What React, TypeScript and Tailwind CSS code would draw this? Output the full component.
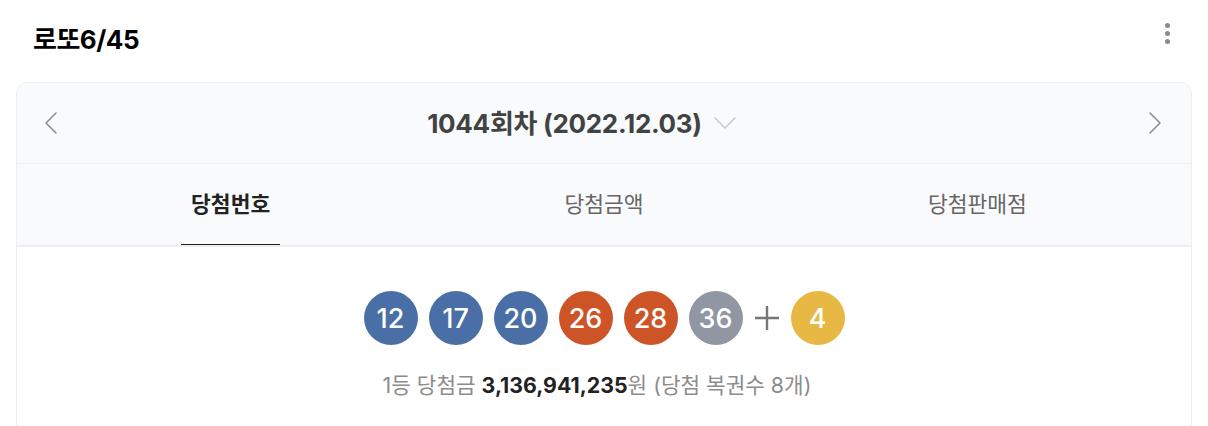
import { ChevronLeft, ChevronRight, ChevronDown } from "lucide-react";

const BALLS = [
  { n: 12, color: "bg-[#4a6fa6]" },
  { n: 17, color: "bg-[#4a6fa6]" },
  { n: 20, color: "bg-[#4a6fa6]" },
  { n: 26, color: "bg-[#cd5427]" },
  { n: 28, color: "bg-[#cd5427]" },
  { n: 36, color: "bg-[#9196a3]" },
];

const TABS = ["당첨번호", "당첨금액", "당첨판매점"];

function Ball({ n, color }: { n: number; color: string }) {
  return (
    <div
      className={`w-[54px] h-[54px] rounded-full ${color} flex items-center justify-center text-white text-[27px] font-medium leading-none`}
    >
      {n}
    </div>
  );
}

export default function App() {
  return (
    <div
      className="w-[1208px] h-[426px] overflow-hidden bg-white"
      style={{ fontFamily: '"Inter", "Noto Sans CJK KR", sans-serif' }}
    >
      {/* title row */}
      <div className="h-[82px] flex items-center justify-between pl-[33px] pr-[38px] pb-[4px]">
        <h1 className="text-[26px] font-bold text-black tracking-[-0.5px]">로또6/45</h1>
        <div className="flex flex-col gap-[3px] mb-[12px]">
          <span className="w-[5px] h-[5px] rounded-full bg-[#8a8a8a]" />
          <span className="w-[5px] h-[5px] rounded-full bg-[#8a8a8a]" />
          <span className="w-[5px] h-[5px] rounded-full bg-[#8a8a8a]" />
        </div>
      </div>

      {/* card */}
      <div className="mx-4 rounded-t-[12px] border border-[#eceef1] border-b-0 overflow-hidden">
        <div className="h-[81px] bg-[#f9fafc] flex items-center px-[14px] pr-[16px] border-b border-[#eceef1]">
          <ChevronLeft className="w-[40px] h-[40px] text-[#8a8a8a]" strokeWidth={0.9} />
          <div className="flex-1 flex items-center justify-center pr-[34px]">
            <span className="text-[26px] font-bold text-[#424242] tracking-[-0.3px]">
              1044회차 (2022.12.03)
            </span>
            <ChevronDown className="w-[40px] h-[40px] ml-[3px] text-[#c9c9c9]" strokeWidth={0.9} />
          </div>
          <ChevronRight className="w-[40px] h-[40px] text-[#8a8a8a]" strokeWidth={0.9} />
        </div>

        <div className="h-[83px] bg-[#f9fafc] grid grid-cols-3 px-[27px] border-b-2 border-[#eceef1]">
          {TABS.map((t, i) => (
            <div key={t} className="flex justify-center">
              <div
                className={`h-full flex items-center px-[10px] text-[21.5px] ${
                  i === 0
                    ? "font-bold text-[#222] border-b border-[#222]"
                    : "text-[#666] border-b border-transparent"
                }`}
              >
                {t}
              </div>
            </div>
          ))}
        </div>

        <div className="bg-white min-h-[200px] pt-[44px] flex flex-col items-center">
          <div className="flex items-center gap-[11px]">
            {BALLS.map((b) => (
              <Ball key={b.n} n={b.n} color={b.color} />
            ))}
            <svg width="26" height="26" viewBox="0 0 26 26" className="text-[#777]">
              <path d="M13 1v24M1 13h24" stroke="currentColor" strokeWidth="2.4" fill="none" />
            </svg>
            <Ball n={4} color="bg-[#e8b845]" />
          </div>
          <p className="mt-[25px] mr-[14px] text-[21.3px] text-[#8c8c8c]">
            1등 당첨금 <b className="font-bold text-[#222]">3,136,941,235</b>원 (당첨 복권수 8개)
          </p>
        </div>
      </div>
    </div>
  );
}
